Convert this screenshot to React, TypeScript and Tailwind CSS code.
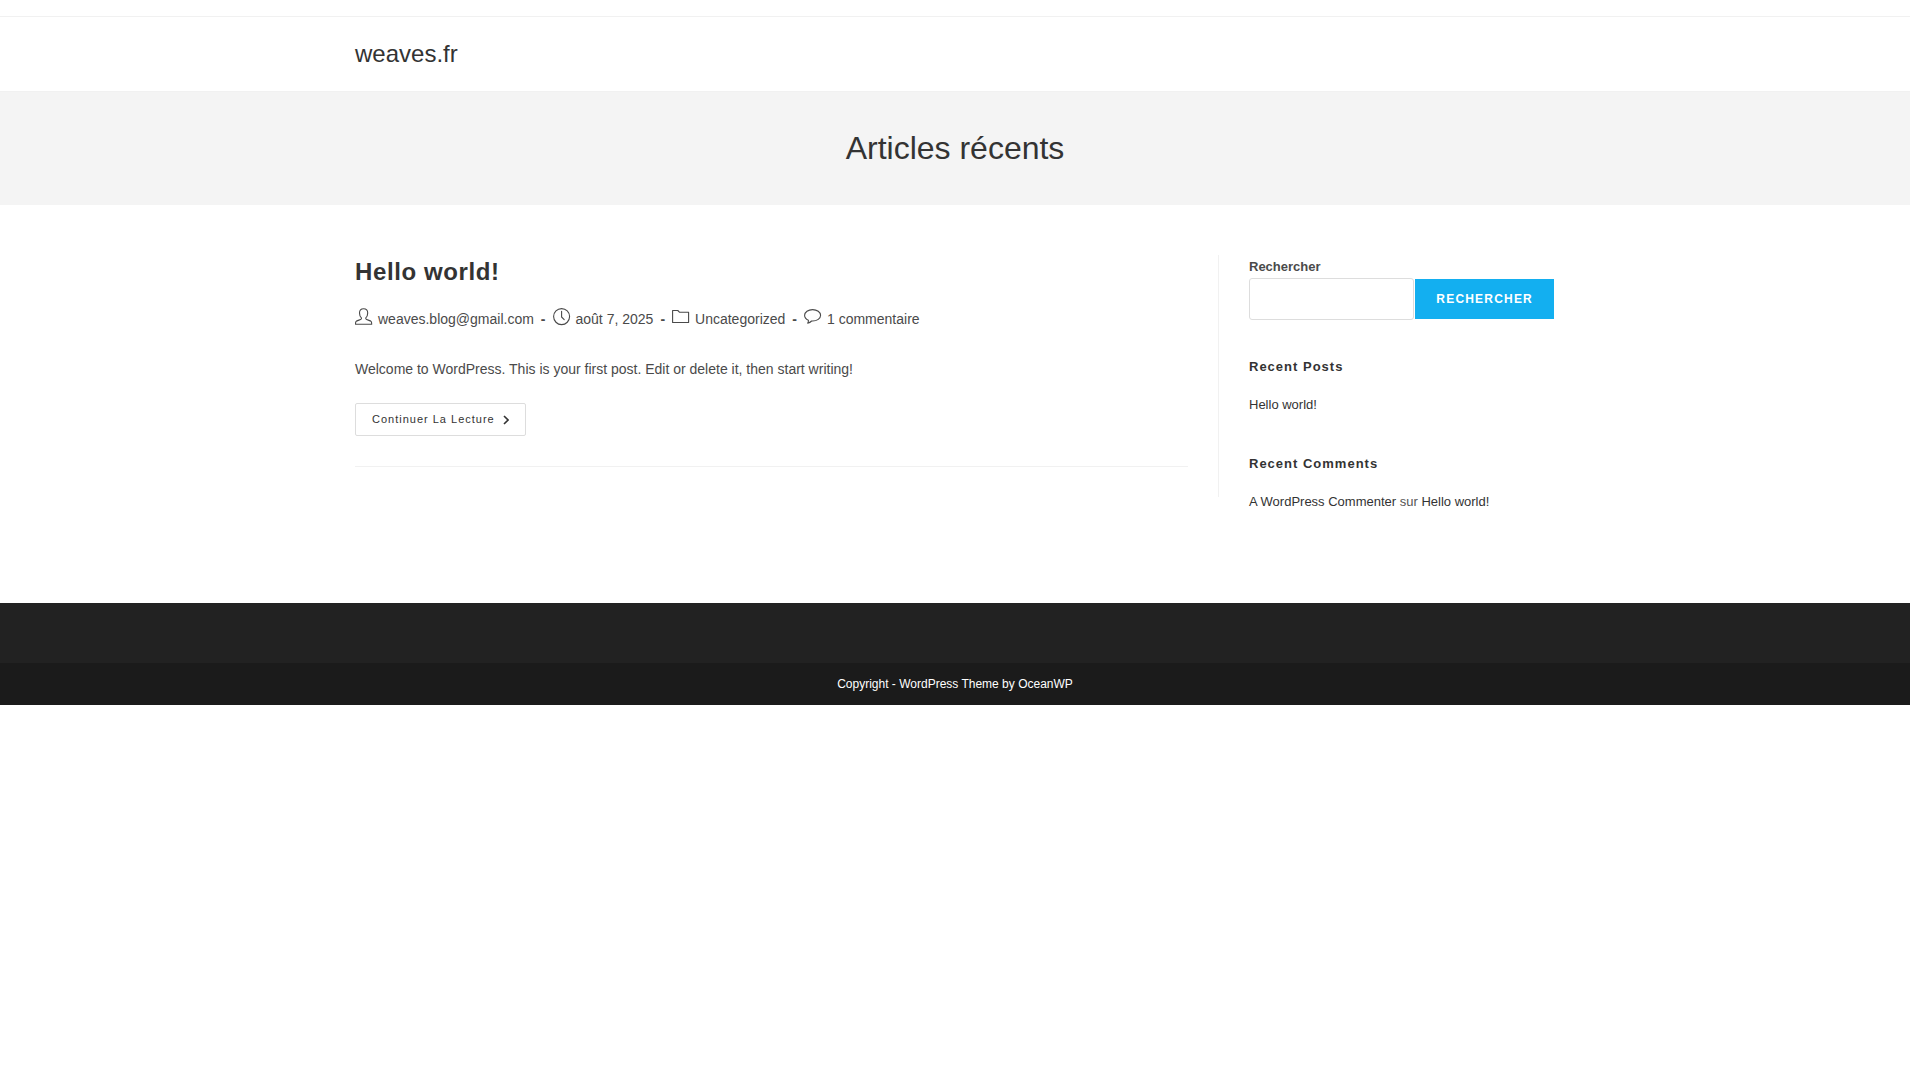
import type { ReactNode } from "react";

function Icon({ children }: { children: ReactNode }) {
  return (
    <svg viewBox="0 0 18 18" className="mr-[5px] h-[18px] w-[18px] shrink-0 -translate-y-0.5" fill="none" stroke="currentColor" strokeWidth="1.1" strokeLinejoin="round" strokeLinecap="round" aria-hidden="true">
      {children}
    </svg>
  );
}

const UserIcon = () => (
  <Icon>
    <path d="M6.4 10.8V9.800C5.100 8.600 4.500 6.700 4.500 4.900C4.500 2.300 6.200.7 8.600.7s4.100 1.600 4.100 4.200c0 1.800-.6 3.700-1.900 4.900v1c0 1 4.500 1.500 5.400 2.700c.5.7.5 1.500.5 2.800H.5c0-1.300 0-2.100.5-2.800c.9-1.200 5.400-1.700 5.400-2.700z" />
  </Icon>
);
const ClockIcon = () => (
  <Icon>
    <circle cx="8.600" cy="8.600" r="8" />
    <path d="M8.600 3.200V9l2.600 2.600" />
  </Icon>
);
const FolderIcon = () => (
  <Icon>
    <path d="M.6 2.500h5.200l1.600 1.700h9.200v10.300H.6z" />
  </Icon>
);
const BubbleIcon = () => (
  <Icon>
    <path d="M8.600 1.600c4.400 0 8 2.500 8 5.700s-3.600 5.700-8 5.700h-1c-1 1-2.400 1.800-3.900 2.200c.6-.8.8-1.800.7-2.900C2.100 11.300.6 9.500.6 7.300c0-3.200 3.600-5.700 8-5.700z" />
  </Icon>
);

const Dash = () => <span className="mx-[7px] font-bold">-</span>;

export default function App() {
  return (
    <div className="pr-[10px] font-['Liberation_Sans',Arial,sans-serif] text-sm text-[#4a4a4a]">
      <div className="h-[17px] border-b border-[#f1f1f1]" />
      <header className="border-b border-[#f1f1f1]">
        <div className="mx-auto flex h-[74px] max-w-[1200px] items-center">
          <a href="#" className="text-2xl text-[#333]">weaves.fr</a>
        </div>
      </header>
      <section className="bg-[#f4f4f4] py-[34px] text-center">
        <h1 className="text-[32px] leading-[45px] text-[#333]">Articles récents</h1>
      </section>

      <div className="mx-auto flex max-w-[1200px] items-start pt-[50px] pb-[90px]">
        <main className="w-[72%] border-r border-[#f1f1f1] pr-[30px] pb-[30px]">
          <article className="border-b border-[#f1f1f1] pb-[30px]">
            <h2 className="text-2xl leading-[34px] font-bold tracking-wide text-[#333]">
              <a href="#">Hello world!</a>
            </h2>
            <div className="mt-[18px] flex h-6 items-center whitespace-nowrap">
              <UserIcon />
              <a href="#">weaves.blog@gmail.com</a>
              <Dash />
              <ClockIcon />
              <span>août 7, 2025</span>
              <Dash />
              <FolderIcon />
              <a href="#">Uncategorized</a>
              <Dash />
              <BubbleIcon />
              <a href="#">1 commentaire</a>
            </div>
            <p className="mt-[25px] leading-[26px]">
              Welcome to WordPress. This is your first post. Edit or delete it, then start writing!
            </p>
            <a href="#" className="mt-[21px] inline-flex h-[33px] items-center rounded-xs border border-[#ddd] px-4 text-[11px] tracking-[1px] text-[#333]">
              Continuer La Lecture
              <svg viewBox="0 0 6 10" className="ml-2 h-2.5 w-1.5" fill="none" stroke="currentColor" strokeWidth="1.6" aria-hidden="true">
                <path d="M1 1l4 4l-4 4" />
              </svg>
            </a>
          </article>
        </main>

        <aside className="w-[28%] pl-[30px] text-[13px] text-[#333]">
          <form className="pr-px" onSubmit={(e) => e.preventDefault()}>
            <label htmlFor="search" className="block leading-[23px] font-bold text-[#4a4a4a]">Rechercher</label>
            <div className="flex items-center gap-px">
              <input id="search" type="search" className="h-[42px] w-0 min-w-0 grow rounded-[3px] border border-[#ddd] px-3 outline-none" />
              <button type="submit" className="h-10 bg-[#13aff0] px-[21px] text-xs font-bold tracking-widest text-white">RECHERCHER</button>
            </div>
          </form>
          <h3 className="mt-9 leading-[22px] font-bold tracking-[1px]">Recent Posts</h3>
          <ul className="mt-4">
            <li className="leading-[22px]"><a href="#">Hello world!</a></li>
          </ul>
          <h3 className="mt-[37px] leading-[22px] font-bold tracking-[1px]">Recent Comments</h3>
          <ul className="mt-4">
            <li className="leading-[22px] text-[#555]">
              <a href="#" className="text-[#333]">A WordPress Commenter</a> sur <a href="#" className="text-[#333]">Hello world!</a>
            </li>
          </ul>
        </aside>
      </div>

      <footer className="text-center text-xs text-white">
        <div className="h-[60px] bg-[#222]" />
        <p className="bg-[#1b1b1b] py-3 leading-[18px]">
          Copyright - WordPress Theme by OceanWP
        </p>
      </footer>
    </div>
  );
}
